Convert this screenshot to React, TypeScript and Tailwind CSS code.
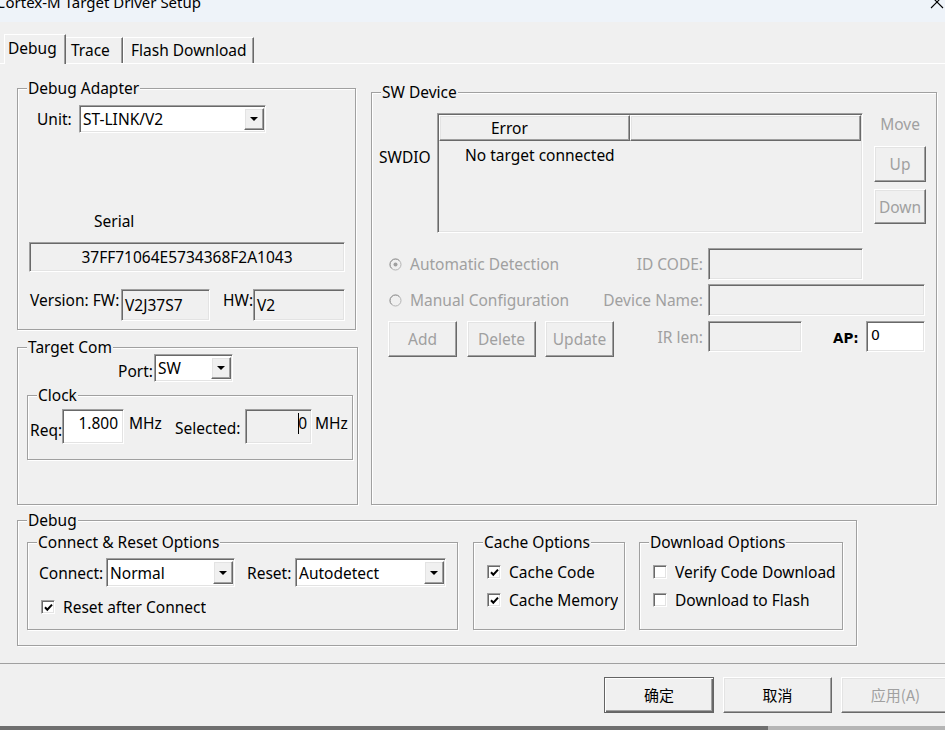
import React from 'react';

// Win32 classic 3D borders
const sunken =
  'border border-t-[#a0a0a0] border-l-[#a0a0a0] border-b-white border-r-white shadow-[inset_1px_1px_0_#696969,inset_-1px_-1px_0_#e3e3e3]';
const raised =
  'border border-t-white border-l-white border-b-[#696969] border-r-[#696969] shadow-[inset_-1px_-1px_0_#a0a0a0,inset_1px_1px_0_#e3e3e3]';
const etched = 'border border-[#a0a0a0] shadow-[1px_1px_0_#fff,inset_1px_1px_0_#fff]';

type Kids = { className?: string; children?: React.ReactNode };

function Group({ title, className = '', children }: Kids & { title: string }) {
  return (
    <div className={`relative shrink-0 ${etched} ${className}`}>
      <span className="absolute -top-[11px] left-[9px] bg-[#f0f0f0] px-px leading-[20px] whitespace-nowrap">
        {title}
      </span>
      {children}
    </div>
  );
}

function Field({ className = '', children }: Kids) {
  return <div className={`flex shrink-0 ${sunken} ${className}`}>{children}</div>;
}

function Combo({ value, className = '' }: { value: string; className?: string }) {
  return (
    <div className={`flex shrink-0 items-center bg-white ${sunken} ${className}`}>
      <span className="flex-1 pl-[3px] whitespace-nowrap">{value}</span>
      <span className={`mr-px flex h-[calc(100%-4px)] w-[20px] items-center justify-center bg-[#f0f0f0] ${raised}`}>
        <svg width="8" height="4" viewBox="0 0 8 4">
          <path d="M0 0h8L4 4z" fill="#000" />
        </svg>
      </span>
    </div>
  );
}

function Btn({ label, disabled, className = '' }: { label: string; disabled?: boolean; className?: string }) {
  return (
    <div
      className={`flex shrink-0 items-center justify-center bg-[#f0f0f0] ${raised} ${
        disabled ? 'text-[#a0a0a0]' : ''
      } ${className}`}
    >
      {label}
    </div>
  );
}

function Check({ checked }: { checked?: boolean }) {
  return (
    <span className={`flex h-[14px] w-[14px] shrink-0 items-center justify-center bg-white ${sunken}`}>
      {checked && (
        <svg width="9" height="9" viewBox="0 0 9 9">
          <path d="M1 4.3l2.3 2.4L8 1.6" fill="none" stroke="#000" strokeWidth="2" />
        </svg>
      )}
    </span>
  );
}

function Radio({ checked }: { checked?: boolean }) {
  return (
    <svg width="13" height="13" viewBox="0 0 13 13" className="shrink-0">
      <circle cx="6.5" cy="6.5" r="5.5" fill="#f0f0f0" stroke="#b4b4b4" />
      <path d="M2.6 10.4A5.5 5.5 0 0 1 10.4 2.6" fill="none" stroke="#9a9a9a" />
      {checked && <circle cx="6.5" cy="6.5" r="2" fill="#a0a0a0" />}
    </svg>
  );
}

function CheckRow({ label, checked, className = '' }: { label: string; checked?: boolean; className?: string }) {
  return (
    <div className="flex h-[20px] items-center">
      <Check checked={checked} />
      <span className={`ml-[8px] overflow-hidden whitespace-nowrap ${className}`}>{label}</span>
    </div>
  );
}

export default function App() {
  return (
    <div className="relative h-[730px] w-[945px] overflow-hidden bg-[#f0f0f0] font-['Noto_Sans',sans-serif] text-[15.5px] leading-[20px] text-black">
      {/* title bar */}
      <div className="flex h-[22px] items-start justify-between bg-[#eef3f9]">
        <span className="-ml-[4px] -mt-[8px] whitespace-nowrap text-[15px] leading-[20px]">
          Cortex-M Target Driver Setup
        </span>
        <svg className="-mt-[5px] mr-[1px]" width="14" height="14" viewBox="0 0 14 14">
          <path d="M1 1l12 12M13 1L1 13" stroke="#000" strokeWidth="1.1" />
        </svg>
      </div>

      {/* tabs */}
      <div className="flex h-[41px] items-end pl-[4px]">
        <div className="relative z-10 -mb-px flex h-[30px] w-[62px] items-start border-l border-t border-r border-l-white border-t-white border-r-[#696969] bg-[#f0f0f0] pl-[3px] pt-[3px] shadow-[inset_-1px_0_0_#a0a0a0]">
          Debug
        </div>
        <div className="flex h-[26px] w-[57px] items-start border-t border-r border-t-white border-r-[#696969] pl-[5px] pt-[2px] shadow-[inset_-1px_0_0_#a0a0a0]">
          Trace
        </div>
        <div className="flex h-[26px] w-[131px] items-start border-l border-t border-r border-l-white border-t-white border-r-[#696969] pl-[7px] pt-[2px] shadow-[inset_-1px_0_0_#a0a0a0]">
          Flash Download
        </div>
      </div>

      {/* tab page */}
      <div className="flex h-[601px] flex-col border-t border-b border-t-white border-b-[#a0a0a0]">
        <div className="flex">
          <div className="ml-[17px] mt-[24px] flex w-[341px] shrink-0 flex-col">
            <Group title="Debug Adapter" className="h-[242px] w-[339px]">
              <div className="mt-[16px] flex items-center pl-[19px]">
                <span className="w-[42px]">Unit:</span>
                <Combo value="ST-LINK/V2" className="h-[28px] w-[187px]" />
              </div>
              <div className="mt-[78px] pl-[76px]">Serial</div>
              <Field className="ml-[11px] mt-[11px] h-[30px] w-[316px] items-center justify-center">
                37FF71064E5734368F2A1043
              </Field>
              <div className="mt-[17px] flex items-start pl-[12px]">
                <span className="mt-px w-[91px] whitespace-nowrap">Version: FW:</span>
                <Field className="h-[32px] w-[89px] items-center pl-[3px]">V2J37S7</Field>
                <span className="ml-[13px] mt-px w-[30px]">HW:</span>
                <Field className="h-[32px] w-[92px] items-center pl-[3px]">V2</Field>
              </div>
            </Group>

            <Group title="Target Com" className="mt-[17px] h-[158px] w-[341px]">
              <div className="mt-[6px] flex items-start pl-[98px]">
                <span className="mt-[7px] w-[38px] pr-px text-right">Port:</span>
                <Combo value="SW" className="h-[28px] w-[79px]" />
              </div>
              <Group title="Clock" className="ml-[9px] mt-[13px] h-[65px] w-[326px]">
                <div className="mt-[13px] flex items-start pl-[2px]">
                  <span className="mt-[11px] w-[32px]">Req:</span>
                  <Field className="h-[35px] w-[62px] justify-end bg-white pr-[5px] pt-[3px]">1.800</Field>
                  <span className="ml-[5px] mt-[4px] w-[46px]">MHz</span>
                  <span className="mt-[9px] w-[70px]">Selected:</span>
                  <Field className="h-[35px] w-[67px] justify-end pr-[4px] pt-[3px]">
                    <span className="relative">
                      0
                      <span className="absolute left-0 top-0 h-[21px] w-px bg-black" />
                    </span>
                  </Field>
                  <span className="ml-[3px] mt-[4px]">MHz</span>
                </div>
              </Group>
            </Group>
          </div>

          <Group title="SW Device" className="ml-[13px] mt-[28px] h-[413px] w-[566px]">
            <div className="mt-[20px] flex items-start pl-[7px]">
              <span className="mt-[34px] w-[58px]">SWDIO</span>
              <div className={`flex h-[120px] w-[426px] shrink-0 flex-col p-px ${sunken}`}>
                <div className="flex h-[26px]">
                  <div className={`flex w-[191px] items-center pl-[51px] ${raised}`}>Error</div>
                  <div className={`flex-1 ${raised}`} />
                </div>
                <div className="mt-[4px] pl-[26px]">No target connected</div>
              </div>
              <div className="ml-[11px] flex w-[52px] flex-col items-center text-[#a0a0a0]">
                <span className="mt-px">Move</span>
                <Btn label="Up" disabled className="mt-[12px] h-[36px] w-[52px]" />
                <Btn label="Down" disabled className="mt-[7px] h-[35px] w-[52px]" />
              </div>
            </div>

            <div className="mt-[15px] flex h-[32px] items-center text-[#a0a0a0]">
              <div className="flex w-[336px] items-center justify-between pl-[17px] pr-[5px]">
                <div className="flex items-center gap-[8px]">
                  <Radio checked />
                  <span>Automatic Detection</span>
                </div>
                <span>ID CODE:</span>
              </div>
              <Field className="h-[32px] w-[155px]" />
            </div>

            <div className="mt-[4px] flex h-[32px] items-center text-[#a0a0a0]">
              <div className="flex w-[336px] items-center justify-between pl-[17px] pr-[5px]">
                <div className="flex items-center gap-[8px]">
                  <Radio />
                  <span>Manual Configuration</span>
                </div>
                <span>Device Name:</span>
              </div>
              <Field className="h-[32px] w-[217px]" />
            </div>

            <div className="mt-[5px] flex items-start">
              <div className="flex w-[336px] items-start justify-between pl-[16px] pr-[5px] text-[#a0a0a0]">
                <div className="flex">
                  <Btn label="Add" disabled className="h-[36px] w-[69px]" />
                  <Btn label="Delete" disabled className="ml-[10px] h-[36px] w-[69px]" />
                  <Btn label="Update" disabled className="ml-[9px] h-[36px] w-[69px]" />
                </div>
                <span className="mt-[6px]">IR len:</span>
              </div>
              <Field className="h-[31px] w-[94px]" />
              <span className="ml-[31px] mt-[7px] w-[33px] font-['DejaVu_Sans',sans-serif] text-[13.5px] font-bold">
                AP:
              </span>
              <Field className="h-[31px] w-[59px] items-center bg-white pb-[3px] pl-[4px] font-['DejaVu_Sans',sans-serif] text-[14px]">
                0
              </Field>
            </div>
          </Group>
        </div>

        <Group title="Debug" className="ml-[17px] mt-[15px] h-[126px] w-[840px]">
          <div className="mt-[21px] flex items-start pl-[9px]">
            <Group title="Connect & Reset Options" className="h-[88px] w-[431px]">
              <div className="mt-[15px] flex items-center pl-[11px]">
                <span className="w-[67px]">Connect:</span>
                <Combo value="Normal" className="h-[29px] w-[129px]" />
                <span className="ml-[12px] w-[48px]">Reset:</span>
                <Combo value="Autodetect" className="h-[29px] w-[151px]" />
              </div>
              <div className="mt-[10px] pl-[13px]">
                <CheckRow label="Reset after Connect" checked />
              </div>
            </Group>

            <Group title="Cache Options" className="ml-[15px] h-[88px] w-[152px]">
              <div className="mt-[19px] flex flex-col gap-[8px] pl-[13px]">
                <CheckRow label="Cache Code" checked />
                <CheckRow label="Cache Memory" checked />
              </div>
            </Group>

            <Group title="Download Options" className="ml-[14px] h-[88px] w-[204px]">
              <div className="mt-[19px] flex flex-col gap-[8px] pl-[13px]">
                <CheckRow label="Verify Code Download" className="w-[163px]" />
                <CheckRow label="Download to Flash" />
              </div>
            </Group>
          </div>
        </Group>
      </div>

      {/* dialog buttons */}
      <div className="mt-[13px] flex gap-[9px] pl-[604px] font-['Noto_Sans_CJK_SC','Noto_Sans',sans-serif] text-[15px]">
        <div className="flex h-[36px] w-[110px] shrink-0 items-center justify-center border border-[#646464] bg-[#f0f0f0] shadow-[inset_1px_1px_0_#fff,inset_-1px_-1px_0_#696969,inset_-2px_-2px_0_#a0a0a0]">
          确定
        </div>
        <Btn label="取消" className="h-[36px] w-[109px]" />
        <Btn label="应用(A)" disabled className="h-[36px] w-[109px]" />
      </div>

      <div className="mt-[13px] flex h-[4px]">
        <div className="w-[768px] bg-[#6f6f6f]" />
        <div className="flex-1 bg-[#b5b5b5]" />
      </div>
    </div>
  );
}
